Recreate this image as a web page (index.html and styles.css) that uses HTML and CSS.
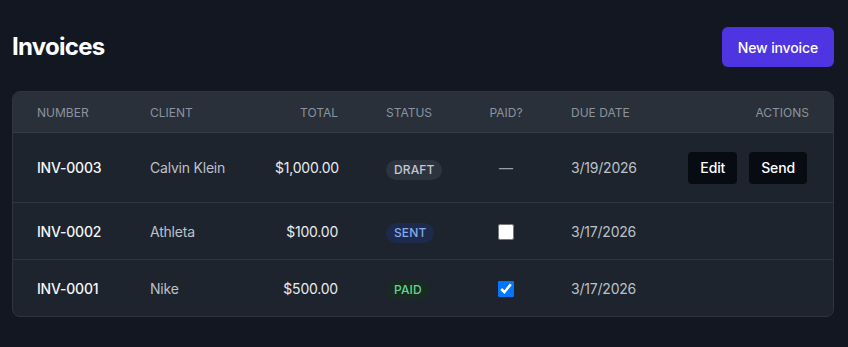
FILE: index.html
```html
<!DOCTYPE html>
<html>
<head>
<meta charset="utf-8">
<link rel="stylesheet" href="styles.css">
</head>
<body>
<main class="page">
  <header class="top">
    <h1 class="title">Invoices</h1>
    <button class="btn-primary">New invoice</button>
  </header>
  <div class="card">
    <table class="grid">
      <colgroup>
        <col class="c-num"><col class="c-client"><col class="c-total"><col class="c-status"><col class="c-paid"><col class="c-due"><col class="c-act">
      </colgroup>
      <thead>
        <tr>
          <th>Number</th><th>Client</th><th class="r">Total</th><th>Status</th><th class="c">Paid?</th><th>Due date</th><th class="r">Actions</th>
        </tr>
      </thead>
      <tbody>
        <tr class="tall">
          <td class="num">INV-0003</td><td class="muted">Calvin Klein</td><td class="r">$1,000.00</td>
          <td><span class="badge draft">Draft</span></td>
          <td class="c"><span class="dash">—</span></td>
          <td class="muted">3/19/2026</td>
          <td class="r act"><div class="acts"><button class="btn-dark">Edit</button><button class="btn-dark">Send</button></div></td>
        </tr>
        <tr>
          <td class="num">INV-0002</td><td class="muted">Athleta</td><td class="r">$100.00</td>
          <td><span class="badge sent">Sent</span></td>
          <td class="c"><input type="checkbox" class="chk"></td>
          <td class="muted">3/17/2026</td>
          <td class="act"></td>
        </tr>
        <tr>
          <td class="num">INV-0001</td><td class="muted">Nike</td><td class="r">$500.00</td>
          <td><span class="badge paid">Paid</span></td>
          <td class="c"><input type="checkbox" class="chk" checked></td>
          <td class="muted">3/17/2026</td>
          <td class="act"></td>
        </tr>
      </tbody>
    </table>
  </div>
</main>
</body>
</html>
```
FILE: styles.css
```css
html, body {
  margin: 0;
  background: #131721;
  font-family: Inter, "Noto Sans", sans-serif;
  color: #f3f4f6;
}
.page {
  padding: 27px 14px 20px 12px;
}
.top {
  display: flex;
  align-items: center;
  justify-content: space-between;
  margin-bottom: 24px;
}
.title {
  margin: 0;
  font-size: 24px;
  font-weight: 700;
  letter-spacing: -0.03em;
  line-height: 40px;
  color: #ffffff;
}
.btn-primary {
  height: 40px;
  padding: 0 16px;
  border: 0;
  border-radius: 6px;
  background: #4f35e1;
  color: #ffffff;
  font-family: inherit;
  font-size: 14px;
  font-weight: 500;
  letter-spacing: -0.01em;
}
.card {
  border: 1px solid #2e3540;
  border-radius: 8px;
  background: #1e242d;
  overflow: hidden;
}
.grid {
  width: 100%;
  border-collapse: collapse;
  table-layout: fixed;
}
.c-num { width: 113px; }
.c-client { width: 125px; }
.c-total { width: 111px; }
.c-status { width: 103px; }
.c-paid { width: 82px; }
.c-due { width: 118px; }
.grid th {
  background: #29303a;
  height: 40px;
  padding: 0 24px;
  text-align: left;
  font-size: 12px;
  font-weight: 400;
  text-transform: uppercase;
  color: #8c939e;
  border-bottom: 1px solid #343c47;
  white-space: nowrap;
}
.grid td {
  height: 56px;
  padding: 0 24px;
  font-size: 14px;
  letter-spacing: -0.015em;
  color: #e8eaee;
  border-bottom: 1px solid #2f3641;
  white-space: nowrap;
}
.grid td.act { padding-right: 26px; }
.grid tr.tall td { height: 69px; }
.grid tbody tr:last-child td { border-bottom: 0; }
.grid .r { text-align: right; }
.grid .c { text-align: center; }
.grid td.num { font-weight: 500; color: #f5f6f8; }
.grid td.muted { color: #bcc1c9; }
.badge {
  display: inline-block;
  height: 20px;
  line-height: 20px;
  padding: 0 8px;
  border-radius: 10px;
  font-size: 12px;
  font-weight: 500;
  text-transform: uppercase;
  letter-spacing: 0.01em;
  position: relative;
  top: 2px;
}
.badge.draft { background: #2d3440; color: #c3c8cf; }
.badge.sent { background: #1d2a4b; color: #86a8ec; }
.badge.paid { background: #182a22; color: #64d68f; }
.dash { color: #9aa0a9; }
.chk {
  width: 16px;
  height: 16px;
  margin: 0;
  vertical-align: middle;
}
.acts {
  display: flex;
  justify-content: flex-end;
  gap: 12px;
}
.btn-dark {
  height: 32px;
  padding: 0 12px;
  border: 0;
  border-radius: 4px;
  background: #070b12;
  color: #ffffff;
  font-family: inherit;
  font-size: 14px;
  font-weight: 500;
  letter-spacing: -0.01em;
}
```
